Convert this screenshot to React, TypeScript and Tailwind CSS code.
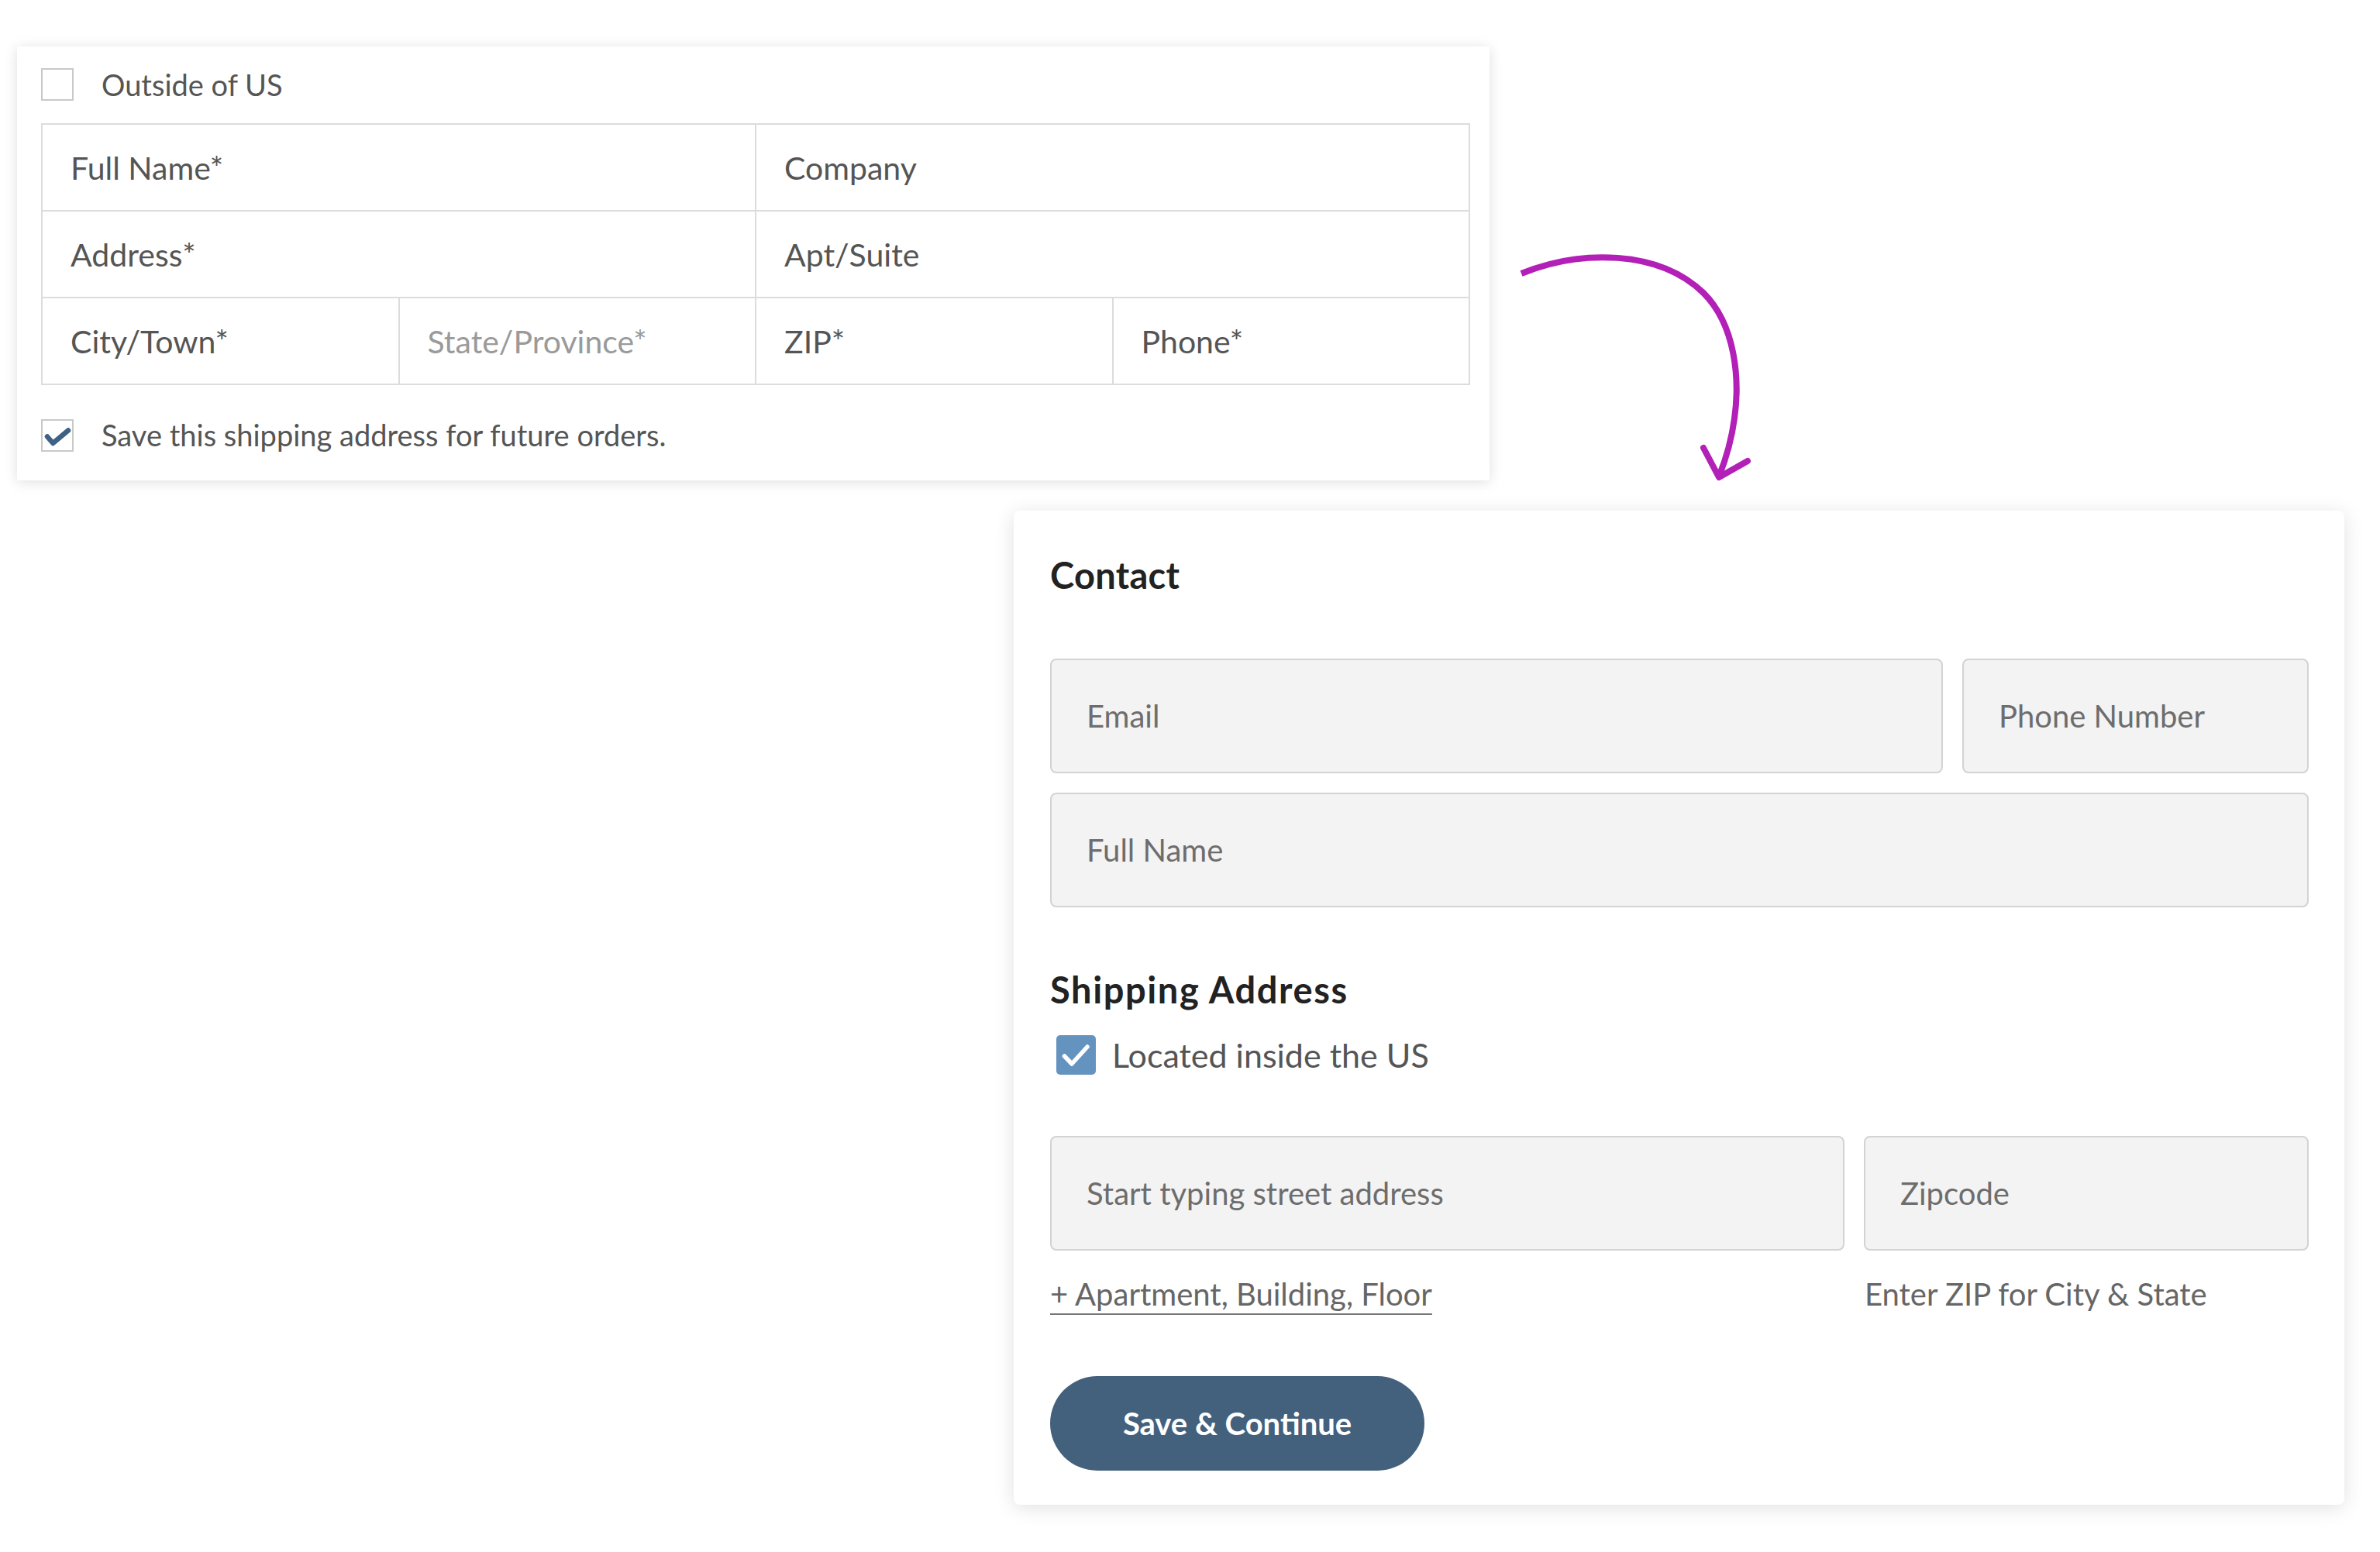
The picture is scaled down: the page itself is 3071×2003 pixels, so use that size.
import React from "react";

function TableCell({ label, light = false, span = 1 }: { label: string; light?: boolean; span?: number }) {
  return (
    <div
      className={`${span === 2 ? "col-span-2" : "col-span-1"} bg-white h-[110px] flex items-center pl-[36px] text-[41px] leading-none ${
        light ? "text-[#9a9a9a]" : "text-[#555555]"
      }`}
    >
      {label}
    </div>
  );
}

function Field({ placeholder }: { placeholder: string }) {
  return (
    <input
      type="text"
      placeholder={placeholder}
      className="h-[148px] w-full rounded-[8px] border-2 border-[#d3d3d3] bg-[#f3f3f3] px-[45px] text-[40px] leading-none text-[#444] placeholder:text-[#6d6d6d] outline-none"
    />
  );
}

export default function App() {
  return (
    <div className="relative w-[3071px] h-[2003px] overflow-hidden bg-white font-[Lato,ui-sans-serif,sans-serif]">
      {/* Top (old) form card */}
      <div className="pt-[60px] pl-[22px]">
        <div className="w-[1900px] h-[560px] bg-white shadow-[0_2px_16px_rgba(0,0,0,0.13)] pl-[31px] pr-[25px] pt-[28px] flex flex-col">
          <div className="flex items-center gap-[36px] h-[42px]">
            <div className="w-[42px] h-[42px] border-2 border-[#c9c9c9] bg-white" />
            <span className="text-[38px] leading-none text-[#555555]">Outside of US</span>
          </div>

          <div className="mt-[29px] w-[1844px] p-[2px] bg-[#dcdcdc] grid grid-cols-4 gap-[2px]">
            <TableCell label="Full Name*" span={2} />
            <TableCell label="Company" span={2} />
            <TableCell label="Address*" span={2} />
            <TableCell label="Apt/Suite" span={2} />
            <TableCell label="City/Town*" />
            <TableCell label="State/Province*" light />
            <TableCell label="ZIP*" />
            <TableCell label="Phone*" />
          </div>

          <div className="mt-[44px] flex items-center gap-[36px] h-[42px]">
            <div className="relative w-[42px] h-[42px] border-2 border-[#c9c9c9] bg-white">
              <svg className="absolute left-[-2px] top-[-2px]" width="42" height="42" viewBox="0 0 42 42">
                <path
                  d="M8 22.5 L15.3 31 L35 14.5"
                  fill="none"
                  stroke="#3e6184"
                  strokeWidth="6.5"
                  strokeLinecap="round"
                  strokeLinejoin="round"
                />
              </svg>
            </div>
            <span className="text-[38px] leading-none text-[#555555] -mt-[3px]">
              Save this shipping address for future orders.
            </span>
          </div>
        </div>
      </div>

      {/* Arrow */}
      <svg
        className="absolute left-[1940px] top-[310px]"
        width="340"
        height="330"
        viewBox="1940 310 340 330"
      >
        <path
          d="M1963 353 C2040 322 2140 322 2198 378 C2240 420 2245 490 2238 540 C2234 570 2226 595 2218 615"
          fill="none"
          stroke="#b320b7"
          strokeWidth="8"
          strokeLinecap="butt"
        />
        <path
          d="M2198 578 L2218 616 L2255 595"
          fill="none"
          stroke="#b320b7"
          strokeWidth="8"
          strokeLinecap="round"
          strokeLinejoin="round"
        />
      </svg>

      {/* Bottom (new) form card */}
      <div className="pl-[1308px] mt-[39px]">
        <div className="w-[1717px] rounded-[8px] bg-white shadow-[0_4px_26px_rgba(0,0,0,0.12)] pl-[47px] pr-[46px] pt-[60px] pb-[44px] flex flex-col">
          <h2 className="text-[47px] leading-none font-bold text-[#222222] tracking-[0.3px]">Contact</h2>

          <div className="mt-[84px] grid grid-cols-[1152px_447px] gap-[25px]">
            <Field placeholder="Email" />
            <Field placeholder="Phone Number" />
          </div>
          <div className="mt-[25px]">
            <Field placeholder="Full Name" />
          </div>

          <h2 className="mt-[83px] text-[47px] leading-none font-bold text-[#222222] tracking-[1.6px]">Shipping Address</h2>

          <div className="mt-[35px] flex items-center h-[51px] pl-[8px] gap-[21px]">
            <div className="w-[51px] h-[51px] rounded-[5px] bg-[#6593bf] flex items-center justify-center">
              <svg width="51" height="51" viewBox="0 0 51 51">
                <path
                  d="M10.5 27 L20 37 L40 15"
                  fill="none"
                  stroke="#ffffff"
                  strokeWidth="5.5"
                  strokeLinecap="round"
                  strokeLinejoin="round"
                />
              </svg>
            </div>
            <span className="text-[43px] leading-none text-[#555555]">Located inside the US</span>
          </div>

          <div className="mt-[79px] grid grid-cols-[1025px_574px] gap-[25px]">
            <Field placeholder="Start typing street address" />
            <Field placeholder="Zipcode" />
          </div>

          <div className="mt-[36px] grid grid-cols-[1025px_574px] gap-[25px]">
            <div>
              <a className="text-[40px] leading-none text-[#666666] underline decoration-2 underline-offset-[10px] decoration-[#777]">
                + Apartment, Building, Floor
              </a>
            </div>
            <div className="pl-[1px] text-[40px] leading-none text-[#666666]">Enter ZIP for City &amp; State</div>
          </div>

          <button className="mt-[85px] w-[483px] h-[122px] rounded-full bg-[#43617d] text-white text-[40px] font-bold leading-none">
            Save &amp; Continue
          </button>
        </div>
      </div>
    </div>
  );
}
